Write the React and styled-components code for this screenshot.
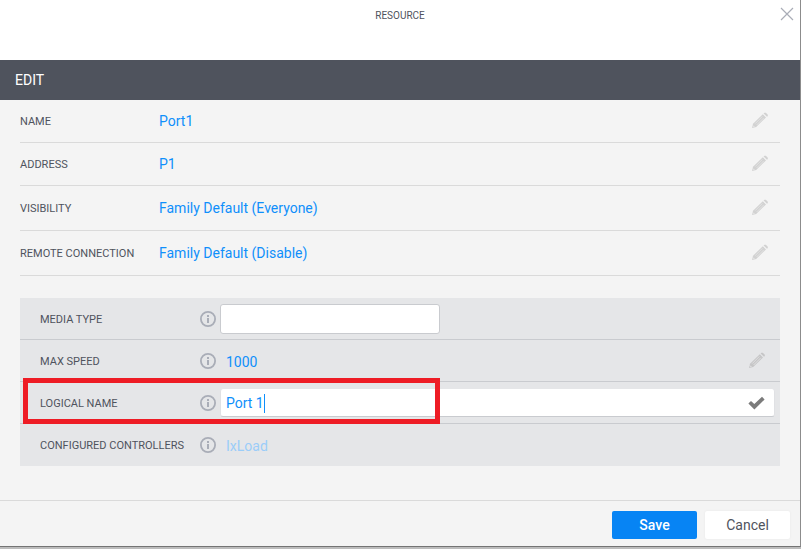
import React, { useState } from "react";
import styled, { createGlobalStyle } from "styled-components";

const GlobalStyle = createGlobalStyle`
  *, *::before, *::after { box-sizing: border-box; }
  body {
    margin: 0;
    background: #bcbcbc;
    color: #4f535d;
    font-family: Roboto, "Liberation Sans", sans-serif;
  }
  button, input { font-family: inherit; }
`;

const Dialog = styled.main`
  display: flex;
  flex-direction: column;
  min-height: calc(100vh - 2px);
  background: #f4f4f4;
  border-right: 1px solid #8c8c8c;
  border-bottom: 1px solid #747474;
`;

const Header = styled.header`
  display: grid;
  grid-template-columns: 1fr auto 1fr;
  align-items: start;
  height: 60px;
  padding: 7px 6px;
  background: #fff;
`;

const Title = styled.h1`
  grid-column: 2;
  margin: 0;
  font-size: 10px;
  font-weight: 400;
  line-height: 18px;
`;

const IconButton = styled.button`
  display: flex;
  flex: none;
  justify-self: end;
  padding: 0;
  border: 0;
  background: none;
  color: ${(p) => p.$color};
  cursor: pointer;
`;

const SectionBar = styled.h2`
  display: flex;
  align-items: center;
  height: 40px;
  margin: 0;
  padding: 0 15px;
  background: #4f535d;
  color: #fff;
  font-size: 14px;
  font-weight: 400;
`;

const Content = styled.form`
  display: flex;
  flex: 1;
  flex-direction: column;
`;

const Sections = styled.div`
  display: flex;
  flex: 1;
  flex-direction: column;
  gap: 22px;
  padding: 0 20px 34px;
`;

const Row = styled.div`
  display: flex;
  align-items: center;
  height: ${(p) => (p.$tall ? 45 : 43)}px;
  padding-right: 11px;
  border-bottom: 1px solid #dadada;
`;

const Label = styled.span`
  flex: none;
  width: 139px;
  font-size: 11px;
  line-height: 17px;
`;

const Value = styled.span`
  flex: 1;
  color: ${(p) => (p.$muted ? "#9bcdf9" : "#0f8ffb")};
  font-size: 14px;
  line-height: 18px;
`;

const Panel = styled.section`
  background: #e5e6e8;
`;

const PanelRow = styled.div`
  position: relative;
  display: flex;
  align-items: center;
  height: 42px;
  padding: 0 5px 0 20px;
  border-bottom: 1px solid ${(p) => (p.$last ? "transparent" : "#c9cbcf")};
`;

const PanelLabel = styled.label`
  flex: none;
  width: 160px;
  padding-top: 3px;
  font-size: 11px;
  line-height: 16px;
`;

const Info = styled.span`
  display: flex;
  flex: none;
  width: 20px;
  color: #a9adb7;
`;

const PanelValue = styled(Value)`
  padding: 2px 6px 0;
`;

const Trailing = styled.span`
  display: flex;
  padding-right: 9px;
`;

const TextField = styled.input`
  width: 220px;
  height: 30px;
  padding: 0 6px;
  border: 1px solid #c9cbcf;
  border-radius: 3px;
  outline: 0;
  background: #fff;
  color: #0f8ffb;
  font-size: 14px;
`;

const EditBox = styled.div`
  display: flex;
  flex: 1;
  align-items: center;
  height: 28px;
  padding: 2px 9px 0 5px;
  border: 1px solid #e0e1e4;
  border-top: 0;
  border-bottom-color: #c9cbcf;
  border-radius: 3px;
  background: #fff;
`;

const EditInput = styled.input`
  field-sizing: content;
  padding: 0;
  border: 0;
  outline: 0;
  background: none;
  color: #0f8ffb;
  caret-color: transparent;
  font-size: 14px;
  line-height: 18px;
`;

const Caret = styled.span`
  width: 1px;
  height: 19px;
  margin-right: auto;
  background: #0f8ffb;
`;

const Highlight = styled.div`
  position: absolute;
  top: -4px;
  left: 3px;
  width: 417px;
  height: 46px;
  border: 5px solid #ee1c25;
  pointer-events: none;
`;

const Footer = styled.footer`
  display: flex;
  justify-content: flex-end;
  gap: 8px;
  padding: 10px 10px 7px;
  border-top: 1px solid #dadada;
`;

const Button = styled.button`
  width: 85px;
  height: 28px;
  padding: 0;
  border: 0;
  border-radius: 2px;
  background: ${(p) => (p.$primary ? "#0784f4" : "#fff")};
  color: ${(p) => (p.$primary ? "#fff" : "#4f535d")};
  font-size: 14px;
  font-weight: ${(p) => (p.$primary ? 500 : 400)};
  box-shadow: ${(p) => (p.$primary ? "none" : "0 0 2px #e4e4e4")};
  cursor: pointer;
`;

const CloseIcon = () => (
  <svg width="14" height="14" viewBox="0 0 14 14" fill="none" stroke="currentColor" aria-hidden="true">
    <path d="M1 1l12 12M13 1L1 13" strokeWidth="1.2" />
  </svg>
);

const PencilIcon = () => (
  <svg width="18" height="18" viewBox="0 0 18 18" aria-hidden="true">
    <path d="M1 16l1-4.2L11.8 2.2l3.2 3.2L5.2 15z" fill="currentColor" />
    <path d="M12.6 1.4l.8-.7h1.4l2 2v1.2l-.8.9z" fill="currentColor" />
    <path d="M4.2 11.6l7.2-7.2M5.6 13l7.2-7.2" stroke="#e9e9e9" strokeWidth=".7" />
    <path d="M2 13.6l1.4 1.4" stroke="#f4f4f4" strokeWidth=".8" />
  </svg>
);

const InfoIcon = () => (
  <svg width="16" height="16" viewBox="0 0 16 16" aria-hidden="true">
    <circle cx="8" cy="8" r="7.1" fill="none" stroke="currentColor" strokeWidth="1.8" />
    <path d="M7 4h2v2H7zM7 7h2v5H7z" fill="currentColor" />
  </svg>
);

const CheckIcon = () => (
  <svg width="17" height="14" viewBox="0 0 17 14" aria-hidden="true">
    <path d="M.4 7.6L3 4.9l3.3 3.2L14 .8l2.6 2.6L6.4 13.4z" fill="currentColor" />
  </svg>
);

const details = [
  { label: "NAME", value: "Port1" },
  { label: "ADDRESS", value: "P1" },
  { label: "VISIBILITY", value: "Family Default (Everyone)", tall: true },
  { label: "REMOTE CONNECTION", value: "Family Default (Disable)", tall: true },
];

export default function App() {
  const [mediaType, setMediaType] = useState("");
  const [logicalName, setLogicalName] = useState("Port 1");

  return (
    <>
      <GlobalStyle />
      <Dialog>
        <Header>
          <Title>RESOURCE</Title>
          <IconButton type="button" aria-label="Close" $color="#a9adb7">
            <CloseIcon />
          </IconButton>
        </Header>
        <SectionBar>EDIT</SectionBar>
        <Content onSubmit={(e) => e.preventDefault()}>
          <Sections>
            <div>
              {details.map(({ label, value, tall }) => (
                <Row key={label} $tall={tall}>
                  <Label>{label}</Label>
                  <Value>{value}</Value>
                  <IconButton type="button" aria-label={`Edit ${label}`} $color="#d2d2d2">
                    <PencilIcon />
                  </IconButton>
                </Row>
              ))}
            </div>
            <Panel>
              <PanelRow>
                <PanelLabel htmlFor="media-type">MEDIA TYPE</PanelLabel>
                <Info><InfoIcon /></Info>
                <TextField
                  id="media-type"
                  value={mediaType}
                  onChange={(e) => setMediaType(e.target.value)}
                />
              </PanelRow>
              <PanelRow>
                <PanelLabel as="span">MAX SPEED</PanelLabel>
                <Info><InfoIcon /></Info>
                <PanelValue>1000</PanelValue>
                <Trailing>
                  <IconButton type="button" aria-label="Edit MAX SPEED" $color="#c6c6c7">
                    <PencilIcon />
                  </IconButton>
                </Trailing>
              </PanelRow>
              <PanelRow>
                <PanelLabel htmlFor="logical-name">LOGICAL NAME</PanelLabel>
                <Info><InfoIcon /></Info>
                <EditBox>
                  <EditInput
                    id="logical-name"
                    value={logicalName}
                    onChange={(e) => setLogicalName(e.target.value)}
                  />
                  <Caret />
                  <IconButton type="button" aria-label="Confirm" $color="#7b7b7b">
                    <CheckIcon />
                  </IconButton>
                </EditBox>
                <Highlight />
              </PanelRow>
              <PanelRow $last>
                <PanelLabel as="span">CONFIGURED CONTROLLERS</PanelLabel>
                <Info><InfoIcon /></Info>
                <PanelValue $muted>IxLoad</PanelValue>
              </PanelRow>
            </Panel>
          </Sections>
          <Footer>
            <Button type="submit" $primary>Save</Button>
            <Button type="button">Cancel</Button>
          </Footer>
        </Content>
      </Dialog>
    </>
  );
}
